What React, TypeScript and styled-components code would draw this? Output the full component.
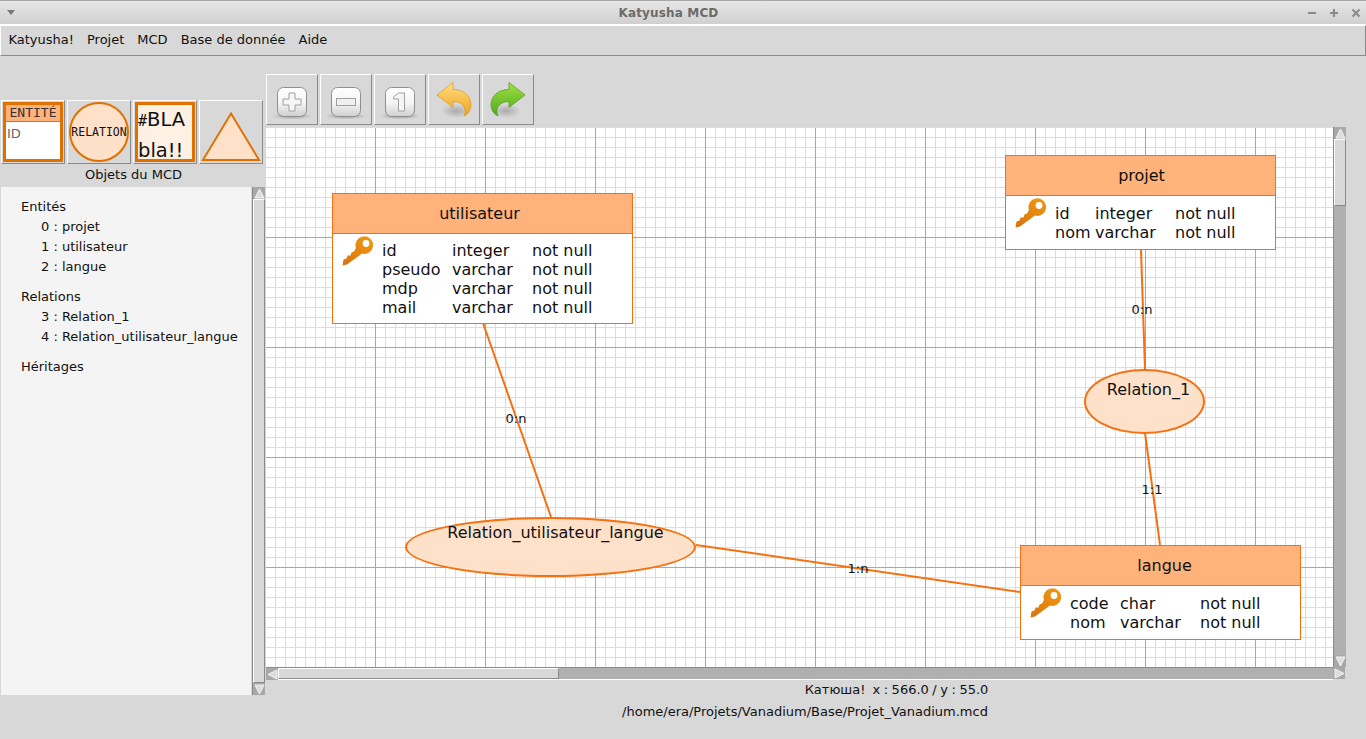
import { FC, ReactNode } from "react";
import styled, { createGlobalStyle } from "styled-components";

const GlobalStyle = createGlobalStyle`
  html, body {
    margin: 0;
    padding: 0;
    background: #d8d8d8;
    overflow: hidden;
  }
  * {
    box-sizing: border-box;
  }
`;

const ORANGE = "#f57010";
const DARK_ORANGE = "#e07000";
const PEACH = "#ffe0c8";
const HEADER = "#ffb27a";
const raised = `
  border-style: solid;
  border-width: 1px;
  border-color: #fff #8a8a8a #8a8a8a #fff;
`;

const Window = styled.div`
  width: 1366px;
  height: 739px;
  display: flex;
  flex-direction: column;
  background: #d8d8d8;
  color: #111;
  font-family: "DejaVu Sans", sans-serif;
  font-size: 13px;
  overflow: hidden;
`;

const TitleBar = styled.div`
  height: 25px;
  flex: none;
  display: flex;
  align-items: center;
  padding: 0 4px 0 6px;
  background: linear-gradient(#e6e6e6, #d0d0d0);
  border-top: 1px solid #a8a8a8;
  border-bottom: 1px solid #fff;
`;

const TitleText = styled.div`
  flex: 1;
  text-align: center;
  padding: 1px 0 0 12px;
  font-size: 12px;
  font-weight: bold;
  letter-spacing: 0.15px;
  color: #6b6b6b;
`;

const WindowButtons = styled.div`
  display: flex;
  gap: 12px;
  padding-right: 1px;
`;

const MenuBar = styled.div`
  ${raised}
  height: 31px;
  flex: none;
  display: flex;
  align-items: center;
  padding-left: 1px;
`;

const MenuItem = styled.div`
  padding: 0 6.5px;
  line-height: 26px;
  margin-bottom: 2px;
`;

const Main = styled.div`
  flex: 1;
  display: flex;
  min-height: 0;
`;

const LeftColumn = styled.div`
  width: 266px;
  flex: none;
  padding: 44px 0 0 1px;
`;

const Palette = styled.div`
  display: flex;
  gap: 2px;
`;

const PaletteButton = styled.div`
  ${raised}
  width: 64px;
  height: 64px;
  padding: 1px;
  display: flex;
  align-items: center;
  justify-content: center;
`;

const PaletteEntity = styled.div`
  width: 100%;
  height: 100%;
  border: 3px solid ${DARK_ORANGE};
  background: #fff;
`;

const PaletteEntityHead = styled.div`
  height: 17px;
  background: ${HEADER};
  border-bottom: 1px solid ${DARK_ORANGE};
  font-family: "DejaVu Sans Mono", monospace;
  font-size: 13px;
  line-height: 16px;
  text-align: center;
  color: #333;
`;

const PaletteEntityBody = styled.div`
  padding: 4px 1px;
  font-size: 13px;
  color: #666;
`;

const PaletteRelation = styled.div`
  width: 60px;
  height: 60px;
  border-radius: 50%;
  background: ${PEACH};
  border: 2px solid ${DARK_ORANGE};
  display: flex;
  align-items: center;
  justify-content: center;
  font-family: "DejaVu Sans Mono", monospace;
  font-size: 11.5px;
  color: #111;
`;

const PaletteNote = styled.div`
  width: 100%;
  height: 100%;
  border: 3px solid ${DARK_ORANGE};
  background: #fff0e4;
  font-size: 19.5px;
  line-height: 29px;
  white-space: nowrap;
`;

const Hash = styled.span`
  font-family: "DejaVu Sans Mono", monospace;
  font-size: 15px;
`;

const PaletteCaption = styled.div`
  height: 23px;
  line-height: 22px;
  text-align: center;
`;

const Tree = styled.div`
  height: 508px;
  display: flex;
`;

const TreeList = styled.div`
  width: 250px;
  margin-right: 1px;
  background: #f4f4f4;
  padding: 10px 0 0 20px;
  line-height: 20px;
`;

const TreeGroup = styled.div`
  margin-bottom: 10px;
`;

const TreeEntry = styled.div`
  padding-left: 20px;
  white-space: nowrap;
`;

const RightColumn = styled.div`
  width: 1080px;
  flex: none;
  padding-top: 18px;
  display: flex;
  flex-direction: column;
`;

const Toolbar = styled.div`
  display: flex;
  gap: 2px;
  height: 51px;
  margin-bottom: 2px;
`;

const ToolButton = styled.div`
  ${raised}
  width: 52px;
  height: 51px;
  display: flex;
  align-items: center;
  justify-content: center;
`;

const CanvasRow = styled.div`
  display: grid;
  grid-template-columns: 1067px 13px;
  grid-template-rows: 540px 13px;
`;

const Canvas = styled.div`
  position: relative;
  overflow: hidden;
  border-top: 1px solid #dcdcdc;
  background-color: #fff;
  background-origin: border-box;
  background-image:
    linear-gradient(to right, #a8a8a8 1px, transparent 1px),
    linear-gradient(to bottom, #a8a8a8 1px, transparent 1px),
    linear-gradient(to right, #dcdcdc 1px, transparent 1px),
    linear-gradient(to bottom, #dcdcdc 1px, transparent 1px);
  background-size: 110px 110px, 110px 110px, 10px 10px, 10px 10px;
  background-position: 109px 0, 0 110px, 9px 0, 0 0;
`;

const Links = styled.svg`
  position: absolute;
  left: 0;
  top: -1px;
  width: 1067px;
  height: 540px;
`;

const EntityBox = styled.div<{ $x: number; $y: number; $w: number; $h: number }>`
  position: absolute;
  left: ${(p) => p.$x}px;
  top: ${(p) => p.$y - 1}px;
  width: ${(p) => p.$w}px;
  height: ${(p) => p.$h}px;
  border: 1px solid ${ORANGE};
  background: #fff;
  font-size: 16px;
`;

const EntityHead = styled.div<{ $indent: number }>`
  height: 40px;
  background: ${HEADER};
  border-bottom: 1px solid ${ORANGE};
  text-align: center;
  text-indent: ${(p) => p.$indent}px;
  line-height: 40px;
`;

const EntityBody = styled.div<{ $cols: string; $pad: number }>`
  position: relative;
  display: grid;
  grid-template-columns: ${(p) => p.$cols};
  grid-auto-rows: 19px;
  padding: ${(p) => p.$pad}px 0 0 49px;
  line-height: 19px;
  white-space: nowrap;
`;

const KeyIcon = styled.svg`
  position: absolute;
  left: 9px;
  top: 2px;
`;

const RelationShape = styled.div<{
  $x: number;
  $y: number;
  $w: number;
  $h: number;
  $pad: number;
  $shift: number;
}>`
  position: absolute;
  left: ${(p) => p.$x}px;
  top: ${(p) => p.$y - 1}px;
  width: ${(p) => p.$w}px;
  height: ${(p) => p.$h}px;
  padding: ${(p) => p.$pad}px 0 0 ${(p) => p.$shift}px;
  border: 2px solid ${ORANGE};
  border-radius: 50%;
  background: ${PEACH};
  text-align: center;
  font-size: 16px;
  line-height: 19px;
  white-space: nowrap;
`;

const Cardinality = styled.div<{ $x: number; $y: number }>`
  position: absolute;
  left: ${(p) => p.$x}px;
  top: ${(p) => p.$y - 1}px;
  transform: translate(-50%, -50%);
  font-size: 13px;
  line-height: 15px;
`;

const ScrollV = styled.div<{ $track: string }>`
  display: flex;
  flex-direction: column;
  width: 13px;
  background: ${(p) => p.$track};
  border-left: 1px solid #8a8a8a;
`;

const ScrollH = styled.div`
  display: flex;
  height: 13px;
  background: #b0b0b0;
  border-top: 1px solid #8a8a8a;
  border-bottom: 1px solid #fff;
`;

const ScrollArrow = styled.div`
  flex: none;
  width: 12px;
  height: 12px;
  display: flex;
  align-items: center;
  justify-content: center;
  background: #a8a8a8;
`;

const ThumbV = styled.div<{ $h: number }>`
  ${raised}
  height: ${(p) => p.$h}px;
  flex: none;
  background: #d8d8d8;
`;

const ThumbH = styled.div<{ $w: number }>`
  ${raised}
  width: ${(p) => p.$w}px;
  flex: none;
  background: #d8d8d8;
`;

const Spring = styled.div`
  flex: 1;
`;

const CornerGap = styled.div`
  background: #d8d8d8;
`;

const CoordsLine = styled.div`
  padding-left: 181px;
  height: 20px;
  line-height: 20px;
  text-align: center;
  white-space: pre;
  word-spacing: -0.6px;
`;

const PathLine = styled.div`
  height: 22px;
  padding: 1px 2px 0 0;
  line-height: 22px;
  text-align: center;
`;

const Tri: FC<{ dir: "up" | "down" | "left" | "right" }> = ({ dir }) => {
  const points = {
    up: "1,10 5.5,1 10,10",
    down: "1,1 5.5,10 10,1",
    left: "10,1 1,5.5 10,10",
    right: "1,1 10,5.5 1,10",
  }[dir];
  return (
    <svg width="11" height="11" viewBox="0 0 11 11">
      <polygon points={points} fill="#dcdcdc" stroke="#f4f4f4" strokeWidth="1" />
    </svg>
  );
};

const Key: FC = () => (
  <KeyIcon width="31" height="31" viewBox="0 0 31 31">
    <defs>
      <linearGradient id="keyFill" x1="1" y1="0" x2="0" y2="1">
        <stop offset="0" stopColor="#f09a10" />
        <stop offset="1" stopColor="#d87410" />
      </linearGradient>
    </defs>
    <path
      d="M0.5 29.5 L1.5 23.5 L4.5 22.5 L5.5 19.5 L8.5 19.5 L9.5 16.5 L12 15.5 L14 12 A8.8 8.8 0 1 1 20 17.6 L5 28.5 Z"
      fill="url(#keyFill)"
    />
    <circle cx="24" cy="7.5" r="3.4" fill="#fff" />
  </KeyIcon>
);

const KeyCapIcon: FC<{ glyph: ReactNode }> = ({ glyph }) => (
  <svg width="40" height="40" viewBox="0 0 40 40">
    <defs>
      <linearGradient id="capFill" x1="0" y1="0" x2="0" y2="1">
        <stop offset="0" stopColor="#ffffff" />
        <stop offset="0.55" stopColor="#f4f4f4" />
        <stop offset="1" stopColor="#cfcfcf" />
      </linearGradient>
      <radialGradient id="capShadow">
        <stop offset="0" stopColor="#999" />
        <stop offset="1" stopColor="#999" stopOpacity="0" />
      </radialGradient>
    </defs>
    <ellipse cx="20" cy="36" rx="21" ry="3.5" fill="url(#capShadow)" />
    <rect x="5.500" y="7.500" width="29" height="29" rx="6" fill="url(#capFill)" stroke="#8f8f8f" />
    {glyph}
  </svg>
);

const ArrowIcon: FC<{ id: string; light: string; dark: string; edge: string; flip?: boolean }> = ({
  id,
  light,
  dark,
  edge,
  flip,
}) => (
  <svg width="40" height="40" viewBox="0 0 40 40">
    <defs>
      <linearGradient id={id} x1="0" y1="0" x2="0" y2="1">
        <stop offset="0" stopColor={light} />
        <stop offset="1" stopColor={dark} />
      </linearGradient>
      <radialGradient id={`${id}Shadow`}>
        <stop offset="0" stopColor="#aaa" />
        <stop offset="1" stopColor="#aaa" stopOpacity="0" />
      </radialGradient>
    </defs>
    <g transform={flip ? "matrix(-1 0 0 1 40 0)" : undefined}>
      <ellipse cx="22" cy="31" rx="15" ry="7" fill={`url(#${id}Shadow)`} />
      <path
        d="M3 15 L19 2.500 L19 9.500 C30 9.500 37 16 37 25 C37 30 34 34 30 36 C32 31 31 27 28 24.500 C26 22.500 22.500 21.500 19 21.500 L19 27.500 Z"
        fill={`url(#${id})`}
        stroke={edge}
        strokeWidth="0.8"
      />
    </g>
  </svg>
);

const tree = [
  { title: "Entités", items: ["0 : projet", "1 : utilisateur", "2 : langue"] },
  { title: "Relations", items: ["3 : Relation_1", "4 : Relation_utilisateur_langue"] },
  { title: "Héritages", items: [] as string[] },
];

const entities = [
  {
    name: "utilisateur",
    x: 66,
    y: 66,
    w: 301,
    h: 131,
    pad: 7,
    indent: -6,
    cols: "70px 80px 1fr",
    rows: [
      ["id", "integer", "not null"],
      ["pseudo", "varchar", "not null"],
      ["mdp", "varchar", "not null"],
      ["mail", "varchar", "not null"],
    ],
  },
  {
    name: "projet",
    x: 739,
    y: 28,
    w: 271,
    h: 95,
    pad: 8,
    indent: 2,
    cols: "40px 80px 1fr",
    rows: [
      ["id", "integer", "not null"],
      ["nom", "varchar", "not null"],
    ],
  },
  {
    name: "langue",
    x: 754,
    y: 418,
    w: 281,
    h: 95,
    pad: 8,
    indent: 8,
    cols: "50px 80px 1fr",
    rows: [
      ["code", "char", "not null"],
      ["nom", "varchar", "not null"],
    ],
  },
];

const links = [
  [217, 196, 285, 390],
  [875, 123, 879, 242],
  [879, 306, 894, 418],
  [430, 418, 754, 465],
];

const App: FC = () => (
  <Window>
    <GlobalStyle />
    <TitleBar>
      <svg width="12" height="8" viewBox="0 0 12 8">
        <polygon points="1,1 9,1 5,6" fill="#777" />
      </svg>
      <TitleText>Katyusha MCD</TitleText>
      <WindowButtons>
        <svg width="10" height="10" viewBox="0 0 10 10">
          <rect x="1" y="4" width="8" height="2" fill="#8a8a8a" />
        </svg>
        <svg width="10" height="10" viewBox="0 0 10 10">
          <path d="M4 1h2v3h3v2H6v3H4V6H1V4h3z" fill="#8a8a8a" />
        </svg>
        <svg width="10" height="10" viewBox="0 0 10 10">
          <path d="M1.500 1.500l7 7M8.500 1.500l-7 7" stroke="#8a8a8a" strokeWidth="2" />
        </svg>
      </WindowButtons>
    </TitleBar>

    <MenuBar>
      {["Katyusha!", "Projet", "MCD", "Base de donnée", "Aide"].map((label) => (
        <MenuItem key={label}>{label}</MenuItem>
      ))}
    </MenuBar>

    <Main>
      <LeftColumn>
        <Palette>
          <PaletteButton>
            <PaletteEntity>
              <PaletteEntityHead>ENTITÉ</PaletteEntityHead>
              <PaletteEntityBody>ID</PaletteEntityBody>
            </PaletteEntity>
          </PaletteButton>
          <PaletteButton>
            <PaletteRelation>RELATION</PaletteRelation>
          </PaletteButton>
          <PaletteButton>
            <PaletteNote>
              <Hash>#</Hash>BLA
              <br />
              bla!!
            </PaletteNote>
          </PaletteButton>
          <PaletteButton>
            <svg width="62" height="62" viewBox="0 0 62 62">
              <polygon points="31,12 60,60 2,60" fill={PEACH} stroke={DARK_ORANGE} strokeWidth="2" />
            </svg>
          </PaletteButton>
        </Palette>
        <PaletteCaption>Objets du MCD</PaletteCaption>
        <Tree>
          <TreeList>
            {tree.map((group) => (
              <TreeGroup key={group.title}>
                <div>{group.title}</div>
                {group.items.map((item) => (
                  <TreeEntry key={item}>{item}</TreeEntry>
                ))}
              </TreeGroup>
            ))}
          </TreeList>
          <ScrollV $track="#d8d8d8">
            <ScrollArrow>
              <Tri dir="up" />
            </ScrollArrow>
            <ThumbV $h={484} />
            <ScrollArrow>
              <Tri dir="down" />
            </ScrollArrow>
          </ScrollV>
        </Tree>
      </LeftColumn>

      <RightColumn>
        <Toolbar>
          <ToolButton>
            <KeyCapIcon
              glyph={
                <path d="M17 13h6v6h6v6h-6v6h-6v-6h-6v-6h6z" fill="#f6f6f6" stroke="#a0a0a0" />
              }
            />
          </ToolButton>
          <ToolButton>
            <KeyCapIcon
              glyph={<rect x="10.500" y="18.500" width="19" height="7" fill="#f0f0f0" stroke="#a0a0a0" />}
            />
          </ToolButton>
          <ToolButton>
            <KeyCapIcon
              glyph={
                <path d="M18.500 13h6v18h-6v-12h-5v-2z" fill="#f6f6f6" stroke="#a0a0a0" />
              }
            />
          </ToolButton>
          <ToolButton>
            <ArrowIcon id="undoFill" light="#ffe080" dark="#f0a020" edge="#d8a030" />
          </ToolButton>
          <ToolButton>
            <ArrowIcon id="redoFill" light="#a0e040" dark="#50a820" edge="#5aa020" flip />
          </ToolButton>
        </Toolbar>

        <CanvasRow>
          <Canvas>
            <Links viewBox="0 0 1067 540">
              {links.map(([x1, y1, x2, y2]) => (
                <line
                  key={`${x1}-${y1}`}
                  x1={x1}
                  y1={y1}
                  x2={x2}
                  y2={y2}
                  stroke={ORANGE}
                  strokeWidth="2"
                />
              ))}
            </Links>
            {entities.map((entity) => (
              <EntityBox key={entity.name} $x={entity.x} $y={entity.y} $w={entity.w} $h={entity.h}>
                <EntityHead $indent={entity.indent}>{entity.name}</EntityHead>
                <EntityBody $cols={entity.cols} $pad={entity.pad}>
                  <Key />
                  {entity.rows.flat().map((cell, i) => (
                    <div key={i}>{cell}</div>
                  ))}
                </EntityBody>
              </EntityBox>
            ))}
            <RelationShape $x={818} $y={242} $w={121} $h={65} $pad={9} $shift={8}>
              Relation_1
            </RelationShape>
            <RelationShape $x={139} $y={390} $w={291} $h={60} $pad={4} $shift={10}>
              Relation_utilisateur_langue
            </RelationShape>
            <Cardinality $x={250} $y={291}>0:n</Cardinality>
            <Cardinality $x={876} $y={182}>0:n</Cardinality>
            <Cardinality $x={886} $y={362}>1:1</Cardinality>
            <Cardinality $x={592} $y={441}>1:n</Cardinality>
          </Canvas>
          <ScrollV $track="#b0b0b0">
            <ScrollArrow>
              <Tri dir="up" />
            </ScrollArrow>
            <ThumbV $h={67} />
            <Spring />
            <ScrollArrow>
              <Tri dir="down" />
            </ScrollArrow>
          </ScrollV>
          <ScrollH>
            <ScrollArrow>
              <Tri dir="left" />
            </ScrollArrow>
            <ThumbH $w={281} />
            <Spring />
          </ScrollH>
          <ScrollArrow>
            <Tri dir="right" />
          </ScrollArrow>
          <CornerGap />
        </CanvasRow>

        <CoordsLine>Катюша!  x : 566.0 / y : 55.0</CoordsLine>
        <PathLine>/home/era/Projets/Vanadium/Base/Projet_Vanadium.mcd</PathLine>
      </RightColumn>
    </Main>
  </Window>
);

export default App;
